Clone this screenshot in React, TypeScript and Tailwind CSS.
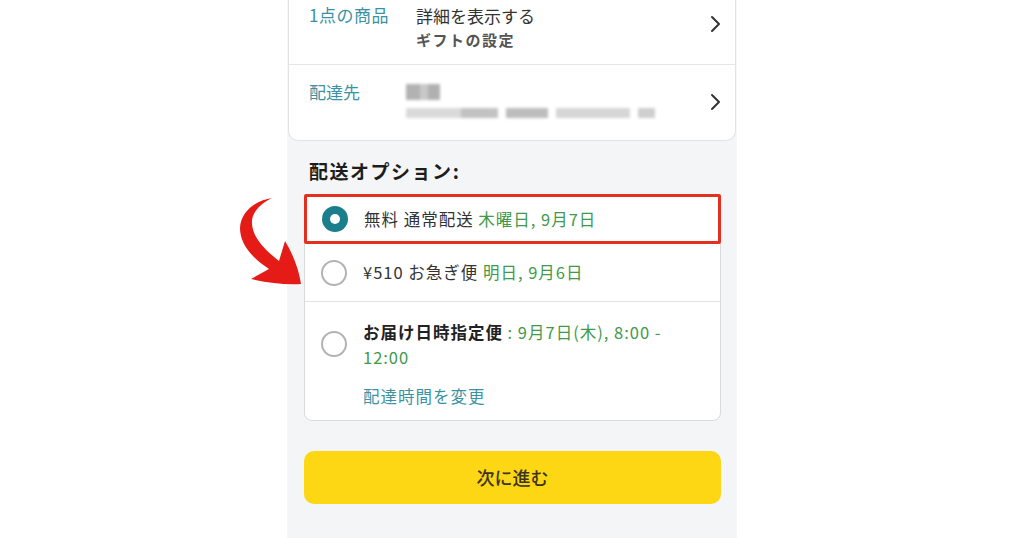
const font = { fontFamily: '"Noto Sans CJK JP", "Noto Sans", sans-serif' };

function Chevron() {
  return (
    <svg width="12" height="18" viewBox="0 0 12 18" className="shrink-0">
      <path d="M3 2l7 7-7 7" fill="none" stroke="#333" strokeWidth="2" strokeLinecap="round" strokeLinejoin="round" />
    </svg>
  );
}

function Radio({ checked }: { checked?: boolean }) {
  if (checked) {
    return (
      <span className="w-[26px] h-[26px] rounded-full bg-[#1b7f8b] flex items-center justify-center shrink-0">
        <span className="w-[10px] h-[10px] rounded-full bg-white" />
      </span>
    );
  }
  return <span className="block w-[26px] h-[26px] rounded-full border-2 border-[#b3b3b3] bg-white shrink-0" />;
}

function Arrow() {
  return (
    <svg className="absolute left-[238px] top-[192px]" width="70" height="100" viewBox="0 0 70 100">
      <path
        d="M34 6 C20 8 3 18 2 36 C2 52 14 66 31 77 L13 87 C30 91 48 93 63 92 C61 78 55 62 47 49 L41 69 C27 58 15 46 14 32 C13 21 22 12 34 6 Z"
        fill="#e41b17"
      />
    </svg>
  );
}

export default function App() {
  return (
    <div className="relative w-full h-[538px] bg-white flex justify-center overflow-hidden" style={font}>
      <div className="w-[450px] h-full bg-[#f4f5f6] flex flex-col">
        {/* top card */}
        <div className="mx-[1px] bg-white border border-t-0 border-[#e2e2e2] rounded-b-[10px]">
          <div className="h-[65px] flex items-start pl-[20px] pr-[14px] border-b border-[#e6e6e6]">
            <span className="w-[107px] pt-[4px] text-[17px] leading-[22px] tracking-[0.03em] text-[#3a93a3]">1点の商品</span>
            <div className="flex-1 flex flex-col pt-[5px]">
              <span className="text-[17px] text-[#333] leading-[22px]">詳細を表示する</span>
              <span className="text-[15px] font-bold tracking-[0.1em] text-[#555] leading-[20px] mt-[3px]">ギフトの設定</span>
            </div>
            <div className="self-center -mt-[17px]"><Chevron /></div>
          </div>
          <div className="h-[75px] flex items-start pl-[20px] pr-[14px]">
            <span className="w-[97px] pt-[16px] text-[17px] leading-[22px] text-[#3a93a3]">配達先</span>
            <div className="flex-1 flex flex-col gap-[8px] pt-[19px]">
              <div className="flex w-[34px] h-[16px] blur-[1.5px]">
                <div className="w-[14px] bg-[#b2b2b2]" />
                <div className="w-[8px] bg-[#c8c8c8]" />
                <div className="w-[12px] bg-[#b0b0b0]" />
              </div>
              <div className="flex gap-[8px] h-[10px]">
                <div className="flex w-[92px] blur-[1.5px]">
                  <div className="w-[55px] bg-[#dadada]" />
                  <div className="w-[37px] bg-[#c2c2c2]" />
                </div>
                <div className="w-[42px] bg-[#bdbdbd] blur-[1.5px]" />
                <div className="w-[74px] bg-[#d6d6d6] blur-[1.5px]" />
                <div className="w-[17px] bg-[#cfcfcf] blur-[1.5px]" />
              </div>
            </div>
            <div className="self-center -mt-[2px]"><Chevron /></div>
          </div>
        </div>

        {/* options */}
        <div className="pl-[17px] pr-[16px]">
          <div className="pt-[17px] pb-[10px] pl-[5px] text-[19px] tracking-[0.08em] font-bold text-[#1d1d1d] leading-[26px]">配送オプション:</div>
          <div className="bg-white border border-[#dadada] rounded-[8px]">
            <div className="h-[50px] -mx-[1px] -mt-[1px] border-[3px] border-[#e3301f] rounded-[2px] flex items-center pl-[15px] gap-[16px] text-[16.5px] tracking-[0.06em]">
              <Radio checked />
              <span className="text-[#333]">無料 通常配送 <span className="text-[#3f9a4a]">木曜日, 9月7日</span></span>
            </div>
            <div className="h-[58px] flex items-center pl-[16px] gap-[16px] text-[16.5px] tracking-[0.06em] border-b border-[#e3e3e3]">
              <Radio />
              <span className="text-[#333]">¥510 お急ぎ便 <span className="text-[#3f9a4a]">明日, 9月6日</span></span>
            </div>
            <div className="h-[118px] flex pl-[16px] gap-[16px] pt-[18px]">
              <div className="pt-[11px] shrink-0"><Radio /></div>
              <div className="flex flex-col text-[16.5px] tracking-[0.06em]">
                <span className="leading-[25px]">
                  <span className="font-bold text-[#222]">お届け日時指定便</span>
                  <span className="text-[#3f9a4a]"> : 9月7日(木), 8:00 -<br />12:00</span>
                </span>
                <span className="mt-[14px] leading-[24px] text-[#3a93a3]">配達時間を変更</span>
              </div>
            </div>
          </div>

          <button className="mt-[30px] w-full h-[53px] rounded-[10px] bg-[#fdd614] text-[18px] text-[#3b3520] font-medium" style={font}>次に進む</button>
        </div>
      </div>
      <Arrow />
    </div>
  );
}
